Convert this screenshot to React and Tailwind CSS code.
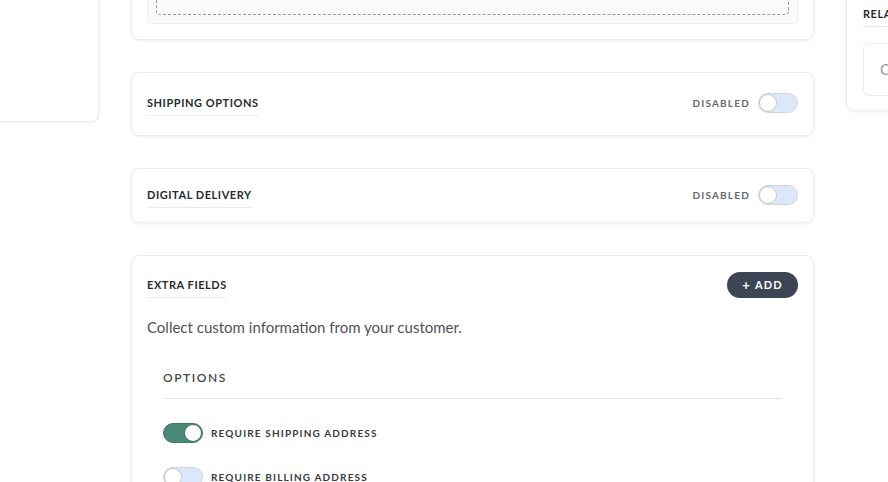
import React, { useState } from "react";

const font = { fontFamily: "Lato, 'Open Sans', sans-serif" };

const Toggle = ({ on, onChange }) => (
  <button
    type="button"
    onClick={() => onChange(!on)}
    className={`relative flex h-5 w-10 shrink-0 items-center rounded-full border ${
      on ? "border-[#3f7a6a] bg-[#4a8978]" : "border-[#cfd6e0] bg-[#dce7fa]"
    }`}
  >
    <span
      className={`absolute top-[0px] h-[18px] w-[18px] rounded-full bg-white ${
        on
          ? "right-[0px] border border-[#3a6f61]"
          : "left-[0px] border border-[#c4cad3]"
      }`}
    />
  </button>
);

const CardTitle = ({ children }) => (
  <h3 className="inline-block border-b border-[#ebebeb] pb-[2px] text-[11px] font-bold uppercase leading-5 tracking-[0.05em] text-[#2a2b2e]">
    {children}
  </h3>
);

const SwitchCard = ({ title, padding }) => {
  const [enabled, setEnabled] = useState(false);
  return (
    <div
      className={`rounded-lg border border-[#ededed] bg-white px-[15px] shadow-[0_1px_3px_rgba(0,0,0,0.07)] ${padding}`}
    >
      <div className="flex items-start justify-between">
        <CardTitle>{title}</CardTitle>
        <div className="flex items-center gap-2">
          <span className="text-[10px] font-bold uppercase leading-5 tracking-[0.12em] text-[#65676b]">
            {enabled ? "Enabled" : "Disabled"}
          </span>
          <Toggle on={enabled} onChange={setEnabled} />
        </div>
      </div>
    </div>
  );
};

const OptionRow = ({ label, initial }) => {
  const [on, setOn] = useState(initial);
  return (
    <div className="flex items-center gap-2">
      <Toggle on={on} onChange={setOn} />
      <span className="text-[10px] font-bold uppercase leading-5 tracking-[0.115em] text-[#3a3b3e]">
        {label}
      </span>
    </div>
  );
};

export default function App() {
  return (
    <div
      className="h-[482px] w-[888px] overflow-hidden bg-white"
      style={font}
    >
      <div className="-mt-[130px] ml-[-101px] flex items-start gap-8">
        {/* left sidebar */}
        <div className="h-[252px] w-[200px] shrink-0 rounded-lg border border-[#ededed] bg-white shadow-[0_1px_3px_rgba(0,0,0,0.07)]" />

        {/* main column */}
        <div className="flex w-[683px] shrink-0 flex-col gap-8">
          <div className="rounded-lg border border-[#ededed] bg-white p-[15px] shadow-[0_1px_3px_rgba(0,0,0,0.07)]">
            <div className="rounded border border-[#efefef] bg-[#fafafa] p-2">
              <div className="h-[120px] rounded-sm border border-dashed border-[#9a9ca3]" />
            </div>
          </div>

          <SwitchCard title="Shipping options" padding="pt-5 pb-[19px]" />
          <SwitchCard title="Digital delivery" padding="pt-4 pb-[14px]" />

          <div className="rounded-lg border border-[#ededed] bg-white px-[15px] pt-[19px] pb-8 shadow-[0_1px_3px_rgba(0,0,0,0.07)]">
            <div className="flex items-start justify-between">
              <CardTitle>Extra fields</CardTitle>
              <button
                type="button"
                className="-mt-[3px] flex h-[26px] w-[71px] items-center justify-center gap-1 rounded-full bg-[#3e4656] text-[11px] font-bold uppercase tracking-[0.1em] text-white"
              >
                <span className="text-[13px] leading-none">+</span>
                <span>Add</span>
              </button>
            </div>
            <p className="mt-[18px] text-[15px] leading-[22px] text-[#505257]">
              Collect custom information from your customer.
            </p>
            <div className="mt-8 px-4">
              <div className="border-b border-[#e6e6e6] pb-3 text-[12px] font-semibold uppercase leading-4 tracking-[0.13em] text-[#45474b]">
                Options
              </div>
              <div className="mt-6 flex flex-col gap-6">
                <OptionRow label="Require shipping address" initial={true} />
                <OptionRow label="Require billing address" initial={false} />
              </div>
            </div>
          </div>
        </div>

        {/* right sidebar */}
        <div className="flex h-[241px] w-[200px] shrink-0 flex-col justify-end rounded-lg border border-[#ededed] bg-white px-4 pb-[14px] shadow-[0_1px_3px_rgba(0,0,0,0.07)]">
          <div>
            <CardTitle>Related products</CardTitle>
          </div>
          <div className="mt-4 flex h-[53px] items-center rounded-md border border-[#ececec] bg-white px-4">
            <span className="whitespace-nowrap text-[15px] text-[#9a9ca1]">
              Choose products
            </span>
          </div>
        </div>
      </div>
    </div>
  );
}
